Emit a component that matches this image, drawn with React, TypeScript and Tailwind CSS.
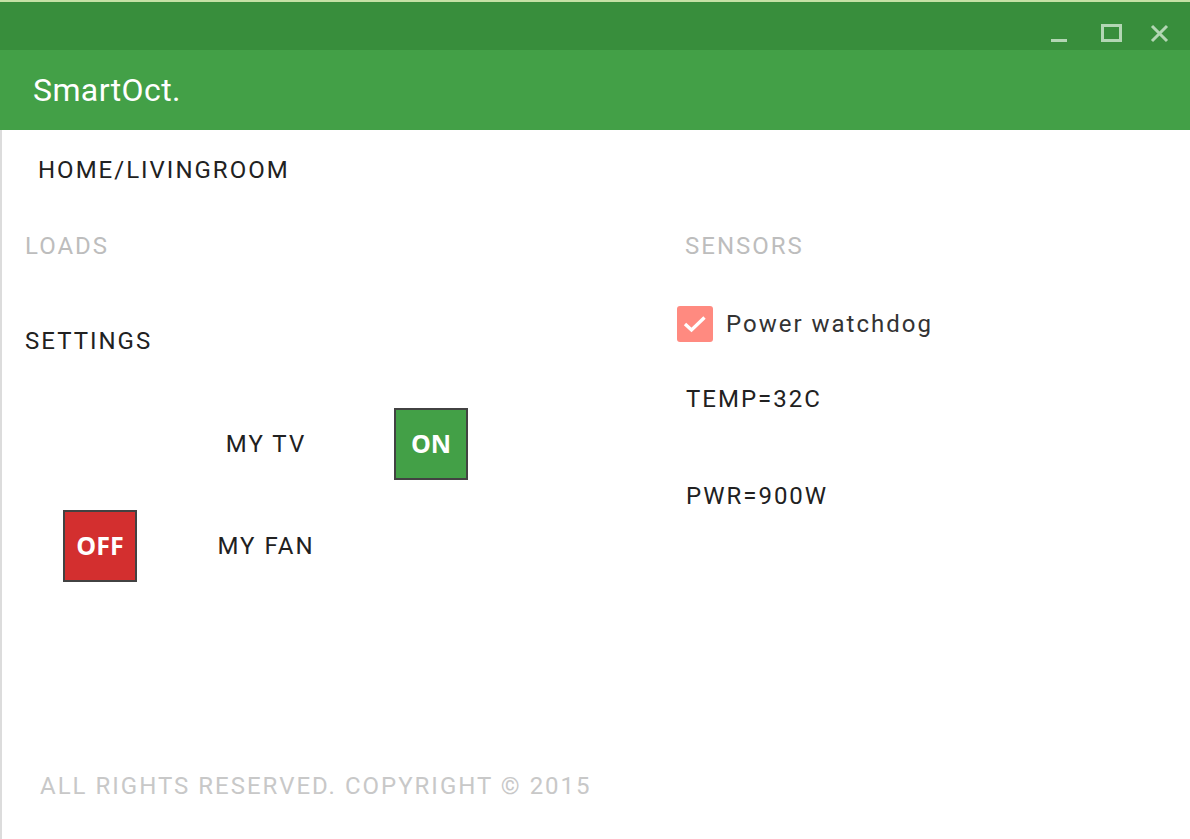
import { FC } from "react";

type Load = {
  name: string;
  on: boolean;
};

const loads: Load[] = [
  { name: "MY TV", on: true },
  { name: "MY FAN", on: false },
];

const ToggleButton: FC<{ on: boolean }> = ({ on }) => (
  <button
    className={`flex h-[72px] w-[74px] items-center justify-center border-2 border-[#424242] font-['Open_Sans',sans-serif] text-[25px] font-bold text-white ${
      on ? "bg-[#43a047]" : "bg-[#d32f2f]"
    }`}
  >
    {on ? "ON" : "OFF"}
  </button>
);

const WindowControls = () => (
  <div className="flex items-center gap-[30px] pr-[21px] pt-[14px] text-[#b3d6b4]">
    <div className="mt-[14px] h-[3px] w-[16px] bg-current" />
    <div className="ml-[4px] h-[18px] w-[21px] border-[3px] border-current" />
    <svg width="19" height="19" viewBox="0 0 19 19" className="ml-[-2px]">
      <path d="M2 2 L17 17 M17 2 L2 17" stroke="currentColor" strokeWidth="3" />
    </svg>
  </div>
);

export default function App() {
  const text = "text-[24px] leading-[28px] tracking-[2px]";

  return (
    <div className="flex h-[839px] w-[1190px] flex-col bg-white font-['Roboto',sans-serif]">
      <div className="h-[2px] bg-[#c5e1a5]" />
      <div className="flex h-[48px] justify-end bg-[#388e3c]">
        <WindowControls />
      </div>
      <div className="flex h-[80px] items-center bg-[#43a047] pl-[33px]">
        <h1 className="text-[32px] leading-[36px] tracking-[0.4px] text-white">SmartOct.</h1>
      </div>

      <div className="flex flex-1 flex-col border-l-2 border-[#dcdcdc]">
        <div className={`ml-[36px] mt-[26px] text-[#212121] ${text}`}>
          HOME/LIVINGROOM
        </div>

        <div className="mt-[48px] flex">
          <div className="w-[683px] pl-[23px]">
            <div className={`text-[#bdbdbd] ${text}`}>LOADS</div>
            <div className={`mt-[67px] text-[#212121] ${text}`}>SETTINGS</div>
            <div className="mt-[38px] grid grid-cols-[150px_182px_148px] grid-rows-[102px_102px] items-center justify-items-center">
              <div />
              <div className={`text-[#212121] ${text}`}>{loads[0].name}</div>
              <ToggleButton on={loads[0].on} />
              <ToggleButton on={loads[1].on} />
              <div className={`text-[#212121] ${text}`}>{loads[1].name}</div>
              <div />
            </div>
          </div>

          <div className="flex-1">
            <div className={`text-[#bdbdbd] ${text}`}>SENSORS</div>
            <label className="ml-[-8px] mt-[46px] flex items-center gap-[13px]">
              <span className="flex h-[36px] w-[36px] items-center justify-center rounded-[3px] bg-[#ff8a80]">
                <svg width="24" height="18" viewBox="0 0 24 18">
                  <path
                    d="M2 9 L8.5 15 L21.5 2.5"
                    fill="none"
                    stroke="white"
                    strokeWidth="3.4"
                  />
                </svg>
              </span>
              <span className={`text-[#333333] ${text}`}>Power watchdog</span>
            </label>
            <div className={`ml-[1px] mt-[43px] text-[#212121] ${text}`}>TEMP=32C</div>
            <div className={`ml-[1px] mt-[69px] text-[#212121] ${text}`}>PWR=900W</div>
          </div>
        </div>

        <div className={`ml-[38px] mt-auto mb-[39px] text-[#c8c8c8] ${text}`}>
          ALL RIGHTS RESERVED. COPYRIGHT © 2015
        </div>
      </div>
    </div>
  );
}
